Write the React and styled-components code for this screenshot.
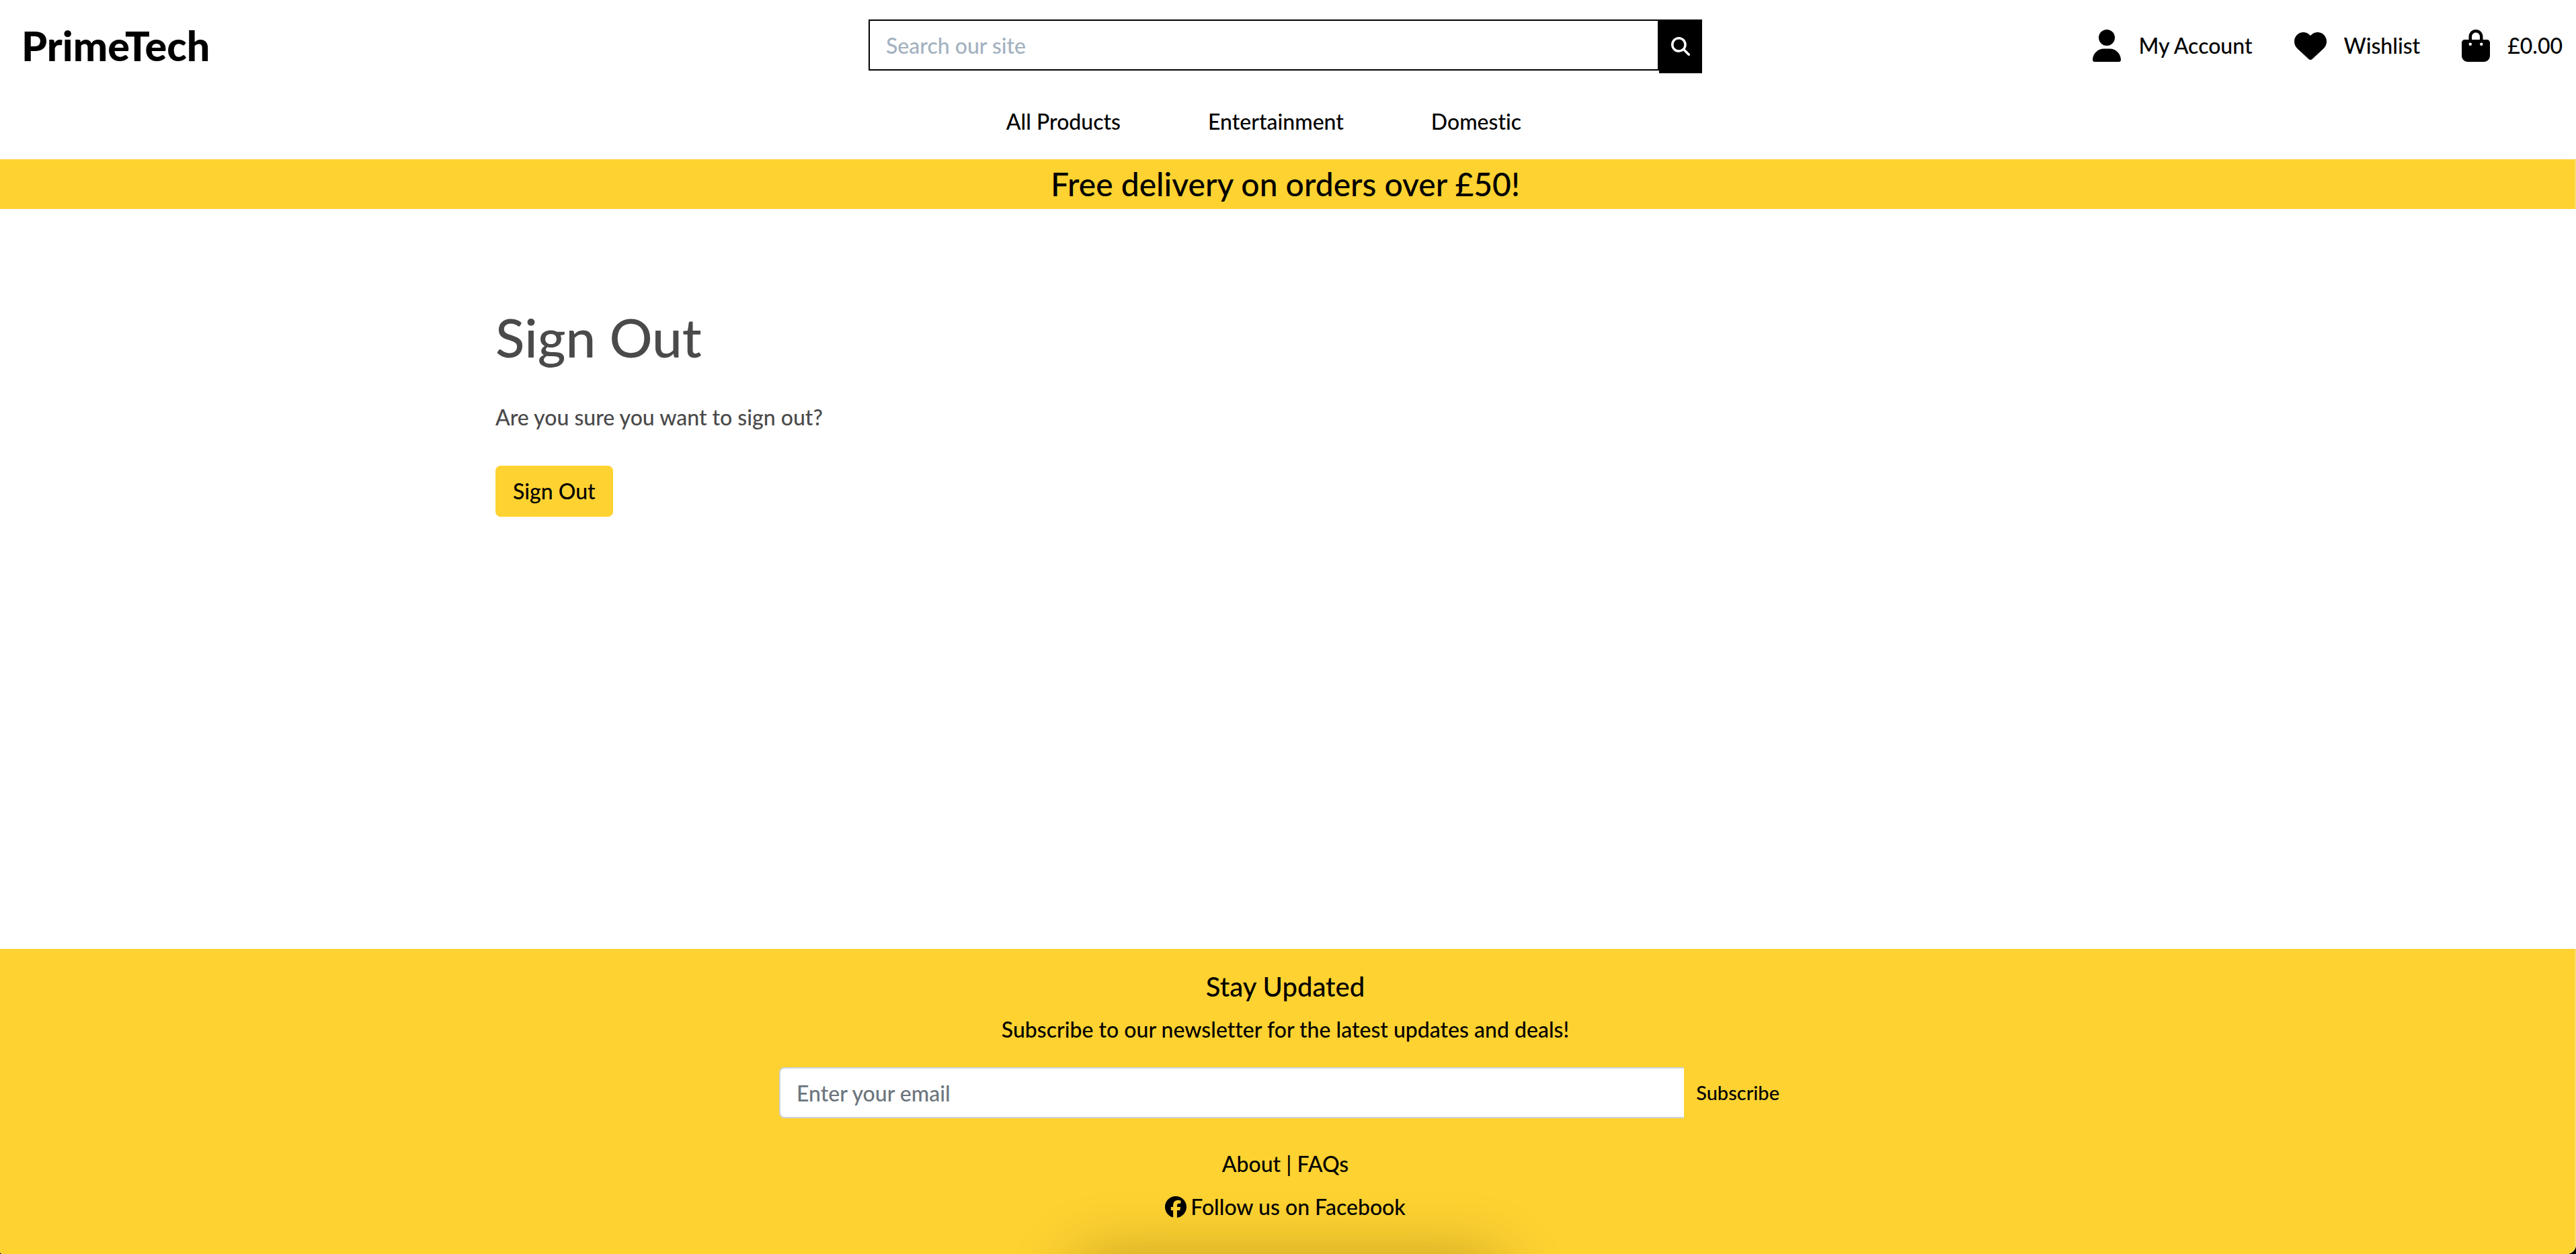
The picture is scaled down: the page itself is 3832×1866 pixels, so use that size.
import React from "react";
import styled, { createGlobalStyle } from "styled-components";
import {
  FaUser,
  FaHeart,
  FaBagShopping,
  FaMagnifyingGlass,
  FaFacebook,
} from "react-icons/fa6";

const YELLOW = "#fed231";

const GlobalStyle = createGlobalStyle`
  *, *::before, *::after { box-sizing: border-box; }
  body {
    margin: 0;
    background: #000;
    color: #000;
    font-family: Lato, "Open Sans", sans-serif;
    font-size: 32px;
    font-weight: 500;
    line-height: 48px;
    font-variant-ligatures: none;
  }
  a { color: inherit; text-decoration: none; }
  h1, h2, p, ul { margin: 0; padding: 0; font-weight: inherit; }
  ul { list-style: none; }
  button, input { font: inherit; color: inherit; margin: 0; }
  button { cursor: pointer; }
`;

const Page = styled.div`
  position: relative;
  display: flex;
  flex-direction: column;
  min-height: 100vh;
  overflow: hidden;
  background: #fff;
  border-radius: 0 0 14px 4px;

  &::after {
    content: "";
    position: absolute;
    inset: 0;
    border-radius: inherit;
    box-shadow: inset -2px 0 0 rgba(255, 255, 255, 0.25);
    pointer-events: none;
  }
`;

const Header = styled.header`
  display: grid;
  grid-template-columns: 1fr 1240px 1fr;
  padding: 29px 20px 32px 12px;
`;

const Logo = styled.a`
  justify-self: start;
  padding-left: 20px;
  font-size: 61px;
  font-weight: 900;
  line-height: 78px;
`;

const SearchForm = styled.form`
  display: flex;
  align-items: flex-start;
`;

const SearchInput = styled.input`
  flex: 1;
  height: 76px;
  padding: 12px 24px;
  border: 2px solid #000;
  border-radius: 0;
  background: #fff;
  outline: none;
  &::placeholder { color: #a3b1bf; opacity: 1; }
`;

const SearchButton = styled.button`
  display: grid;
  place-items: center;
  width: 64px;
  height: 80px;
  padding: 0;
  border: 0;
  background: #000;
  color: #fff;
  font-size: 28px;
`;

const Actions = styled.ul`
  display: flex;
  justify-content: flex-end;
  gap: 62px;
  height: 78px;
`;

const ActionLink = styled.a`
  display: flex;
  align-items: center;
  gap: 26px;
  height: 78px;
  svg { font-size: 48px; }
`;

const UserIcon = styled(FaUser)`
  width: 42px;
  height: 48px;
`;

const BagIcon = styled(FaBagShopping)`
  width: 42px;
  height: 48px;
`;

const Nav = styled.nav`
  grid-column: 1 / -1;
  padding: 48px 64px 0 0;
`;

const NavList = styled.ul`
  display: flex;
  justify-content: center;
  gap: 130px;
`;

const Banner = styled.p`
  padding: 8px 8px 8px 0;
  background: ${YELLOW};
  font-size: 48px;
  line-height: 58px;
  text-align: center;
`;

const Main = styled.main`
  flex: 1;
  display: flex;
  flex-direction: column;
  align-items: flex-start;
  gap: 48px;
  width: 100%;
  max-width: 2358px;
  margin: 0 auto;
  padding: 142px 0 48px;
  color: #4a4a4a;
`;

const Title = styled.h1`
  font-size: 80px;
  line-height: 96px;
`;

const SignOutButton = styled.button`
  height: 76px;
  padding: 0 26px;
  border: 0;
  border-radius: 8px;
  background: ${YELLOW};
  color: #000;
`;

const Footer = styled.footer`
  display: flex;
  flex-direction: column;
  align-items: center;
  gap: 16px;
  padding: 32px 8px 46px 0;
  background: ${YELLOW};
`;

const FooterTitle = styled.h2`
  font-size: 40px;
  line-height: 48px;
`;

const Newsletter = styled.form`
  display: flex;
  width: 1506px;
  max-width: 100%;
  margin: 16px 0 28px;
`;

const EmailInput = styled.input`
  flex: 1;
  height: 76px;
  padding: 12px 24px;
  border: 2px solid #ced4da;
  border-right: 0;
  border-radius: 8px 0 0 8px;
  background: #fff;
  outline: none;
  &::placeholder { color: #6c757d; opacity: 1; }
`;

const SubscribeButton = styled.button`
  padding: 0 18px;
  border: 0;
  background: ${YELLOW};
  font-size: 29px;
`;

const SocialLink = styled.a`
  display: flex;
  align-items: center;
  gap: 6px;
`;

const BottomShade = styled.div`
  position: absolute;
  bottom: -100px;
  left: 50%;
  width: 640px;
  height: 90px;
  transform: translateX(-50%);
  border-radius: 40px;
  box-shadow: 0 0 100px rgba(0, 0, 0, 0.28);
  pointer-events: none;
`;

export default function App() {
  return (
    <>
      <GlobalStyle />
      <Page>
        <Header>
          <Logo href="#">PrimeTech</Logo>
          <SearchForm onSubmit={(e) => e.preventDefault()}>
            <SearchInput type="text" placeholder="Search our site" aria-label="Search our site" />
            <SearchButton type="submit" aria-label="Search">
              <FaMagnifyingGlass />
            </SearchButton>
          </SearchForm>
          <Actions>
            <li><ActionLink href="#"><UserIcon />My Account</ActionLink></li>
            <li><ActionLink href="#"><FaHeart />Wishlist</ActionLink></li>
            <li><ActionLink href="#"><BagIcon />£0.00</ActionLink></li>
          </Actions>
          <Nav>
            <NavList>
              <li><a href="#">All Products</a></li>
              <li><a href="#">Entertainment</a></li>
              <li><a href="#">Domestic</a></li>
            </NavList>
          </Nav>
        </Header>
        <Banner>Free delivery on orders over £50!</Banner>
        <Main>
          <Title>Sign Out</Title>
          <p>Are you sure you want to sign out?</p>
          <SignOutButton type="button">Sign Out</SignOutButton>
        </Main>
        <Footer>
          <FooterTitle>Stay Updated</FooterTitle>
          <p>Subscribe to our newsletter for the latest updates and deals!</p>
          <Newsletter onSubmit={(e) => e.preventDefault()}>
            <EmailInput type="email" placeholder="Enter your email" aria-label="Email address" />
            <SubscribeButton type="submit">Subscribe</SubscribeButton>
          </Newsletter>
          <p><a href="#">About</a> | <a href="#">FAQs</a></p>
          <SocialLink href="#"><FaFacebook />Follow us on Facebook</SocialLink>
        </Footer>
        <BottomShade />
      </Page>
    </>
  );
}
